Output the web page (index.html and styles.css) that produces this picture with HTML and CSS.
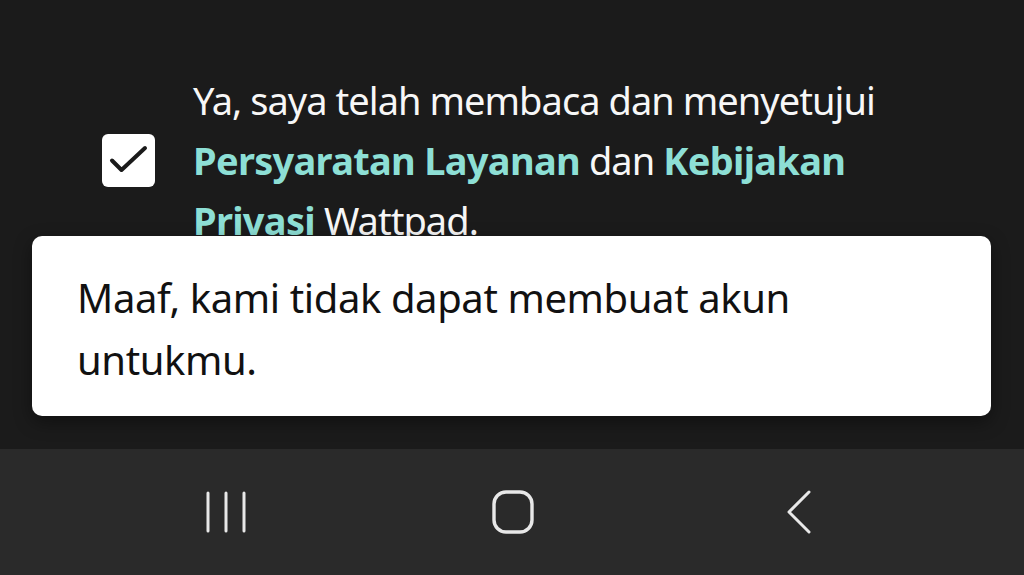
FILE: index.html
```html
<!DOCTYPE html>
<html lang="id">
<head>
<meta charset="utf-8">
<title>Wattpad</title>
<link rel="stylesheet" href="styles.css">
</head>
<body>
<div class="screen">
  <main class="content">
    <div class="agree-row">
      <div class="checkbox">
        <svg width="53" height="53" viewBox="0 0 53 53"><path d="M10 26.5 L19.5 36 L43 14" fill="none" stroke="#1a1a1a" stroke-width="4" stroke-linecap="round" stroke-linejoin="round"/></svg>
      </div>
      <p class="agree-text">Ya, saya telah membaca dan menyetujui <a class="link">Persyaratan Layanan</a> dan <a class="link">Kebijakan Privasi</a> Wattpad.</p>
    </div>
    <div class="toast">Maaf, kami tidak dapat membuat akun untukmu.</div>
  </main>
  <nav class="navbar">
    <div class="nav-btn">
      <svg width="44" height="44" viewBox="0 0 44 44"><g stroke="#e8e8e8" stroke-width="3" stroke-linecap="round"><line x1="4" y1="3" x2="4" y2="41"/><line x1="22" y1="3" x2="22" y2="41"/><line x1="40" y1="3" x2="40" y2="41"/></g></svg>
    </div>
    <div class="nav-btn">
      <svg width="44" height="46" viewBox="0 0 44 46"><rect x="3" y="3" width="38" height="40" rx="12" fill="none" stroke="#e8e8e8" stroke-width="3.4"/></svg>
    </div>
    <div class="nav-btn">
      <svg width="30" height="46" viewBox="0 0 30 46"><path d="M24 3 L4 23 L24 43" fill="none" stroke="#e8e8e8" stroke-width="3" stroke-linecap="round" stroke-linejoin="round"/></svg>
    </div>
  </nav>
</div>
</body>
</html>
```
FILE: styles.css
```css
* { box-sizing: border-box; }
html, body { margin: 0; padding: 0; background: #1a1a1a; }
.screen {
  width: 1024px;
  height: 575px;
  display: flex;
  flex-direction: column;
  font-family: "Noto Sans", "Open Sans", sans-serif;
  overflow: hidden;
}
.content {
  position: relative;
  height: 449px;
  background: #1b1b1b;
  overflow: hidden;
}
.agree-row {
  display: flex;
  align-items: center;
  gap: 38px;
  padding: 70px 0 0 102px;
}
.checkbox {
  flex: none;
  width: 53px;
  height: 53px;
  background: #fff;
  border-radius: 6px;
  display: flex;
  align-items: center;
  justify-content: center;
}
.checkbox svg { display: block; }
.agree-text {
  margin: 0;
  width: 710px;
  color: #f7f7f7;
  font-size: 38px;
  line-height: 60px;
  letter-spacing: -0.95px;
}
.link {
  color: #8ddfd5;
  font-weight: 700;
  letter-spacing: -0.7px;
}
.toast {
  position: absolute;
  left: 32px;
  top: 236px;
  width: 959px;
  height: 180px;
  background: #fff;
  border-radius: 10px;
  padding: 31px 120px 0 45px;
  color: #111;
  font-size: 40px;
  line-height: 62px;
  letter-spacing: -0.4px;
  box-shadow: 0 6px 18px rgba(0,0,0,0.4);
}
.navbar {
  height: 126px;
  background: #2a2a2a;
  display: flex;
  align-items: center;
  gap: 187px;
  padding: 0 0 0 176px;
}
.nav-btn {
  width: 100px;
  display: flex;
  align-items: center;
  justify-content: center;
}
.nav-btn svg { display: block; }
```
